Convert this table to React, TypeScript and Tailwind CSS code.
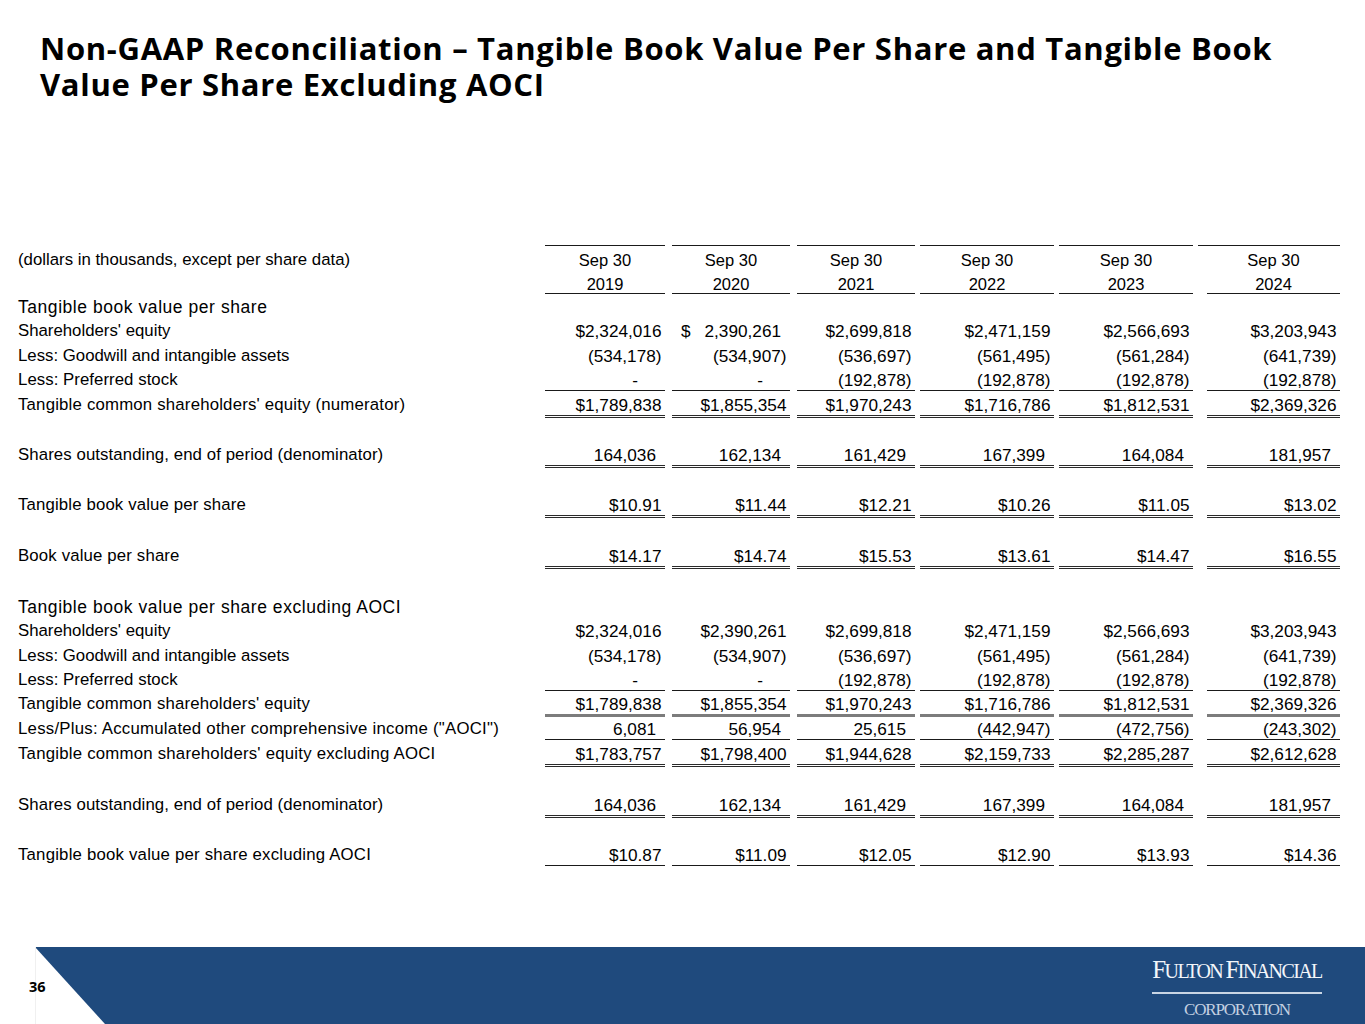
import React from "react";

type Border = "none" | "single" | "double" | "grey";
type Row =
  | { t: "blank"; h: string }
  | { t: "section"; label: string; h: string }
  | { t: "data"; label: string; vals: string[]; b: Border; h: string; tr: string };

const COLS = [
  "w-[120px]",
  "ml-[7px] w-[118px]",
  "ml-[7px] w-[118px]",
  "ml-[5px] w-[134px]",
  "ml-[5px] w-[134px]",
  "ml-[14px] w-[133px]",
];
const TOPCOLS = [
  "w-[120px]",
  "ml-[7px] w-[118px]",
  "ml-[7px] w-[118px]",
  "ml-[5px] w-[134px]",
  "ml-[5px] w-[134px]",
  "ml-[5px] w-[142px]",
];

const BORDER: Record<Border, string> = {
  none: "h-[21.9px]",
  single: "box-content h-[21.9px] border-b border-[#1a1a1a]",
  double: "box-content h-[21.9px] border-b-[3px] border-double border-[#2a2a2a]",
  grey: "box-content h-[21.9px] border-b-[3px] border-solid border-[#7c7c7c]",
};

const SE1 = ["$2,324,016", "$ 2,390,261", "$2,699,818", "$2,471,159", "$2,566,693", "$3,203,943"];
const SE2 = ["$2,324,016", "$2,390,261", "$2,699,818", "$2,471,159", "$2,566,693", "$3,203,943"];
const GW = ["(534,178)", "(534,907)", "(536,697)", "(561,495)", "(561,284)", "(641,739)"];
const PS = ["-", "-", "(192,878)", "(192,878)", "(192,878)", "(192,878)"];
const TC = ["$1,789,838", "$1,855,354", "$1,970,243", "$1,716,786", "$1,812,531", "$2,369,326"];
const SO = ["164,036", "162,134", "161,429", "167,399", "164,084", "181,957"];

const ROWS: Row[] = [
  { t: "section", label: "Tangible book value per share", h: "h-[24px]" },
  { t: "data", label: "Shareholders' equity", vals: SE1, b: "none", h: "h-[25px]", tr: "tracking-normal" },
  { t: "data", label: "Less: Goodwill and intangible assets", vals: GW, b: "none", h: "h-[24px]", tr: "tracking-normal" },
  { t: "data", label: "Less: Preferred stock", vals: PS, b: "single", h: "h-[24.5px]", tr: "tracking-[0.05px]" },
  { t: "data", label: "Tangible common shareholders' equity (numerator)", vals: TC, b: "double", h: "h-[24.5px]", tr: "tracking-[0.19px]" },
  { t: "blank", h: "h-[26px]" },
  { t: "data", label: "Shares outstanding, end of period (denominator)", vals: SO, b: "double", h: "h-[24.5px]", tr: "tracking-[0.09px]" },
  { t: "blank", h: "h-[25.5px]" },
  { t: "data", label: "Tangible book value per share", vals: ["$10.91", "$11.44", "$12.21", "$10.26", "$11.05", "$13.02"], b: "double", h: "h-[25px]", tr: "tracking-[0.14px]" },
  { t: "blank", h: "h-[26px]" },
  { t: "data", label: "Book value per share", vals: ["$14.17", "$14.74", "$15.53", "$13.61", "$14.47", "$16.55"], b: "double", h: "h-[25px]", tr: "tracking-[0.15px]" },
  { t: "blank", h: "h-[26px]" },
  { t: "section", label: "Tangible book value per share excluding AOCI", h: "h-[24px]" },
  { t: "data", label: "Shareholders' equity", vals: SE2, b: "none", h: "h-[25px]", tr: "tracking-normal" },
  { t: "data", label: "Less: Goodwill and intangible assets", vals: GW, b: "none", h: "h-[24px]", tr: "tracking-normal" },
  { t: "data", label: "Less: Preferred stock", vals: PS, b: "single", h: "h-[24px]", tr: "tracking-[0.05px]" },
  { t: "data", label: "Tangible common shareholders' equity", vals: TC, b: "grey", h: "h-[25px]", tr: "tracking-[0.17px]" },
  { t: "data", label: "Less/Plus: Accumulated other comprehensive income (\"AOCI\")", vals: ["6,081", "56,954", "25,615", "(442,947)", "(472,756)", "(243,302)"], b: "single", h: "h-[25px]", tr: "tracking-[0.24px]" },
  { t: "data", label: "Tangible common shareholders' equity excluding AOCI", vals: ["$1,783,757", "$1,798,400", "$1,944,628", "$2,159,733", "$2,285,287", "$2,612,628"], b: "double", h: "h-[25px]", tr: "tracking-[0.22px]" },
  { t: "blank", h: "h-[26px]" },
  { t: "data", label: "Shares outstanding, end of period (denominator)", vals: SO, b: "double", h: "h-[25px]", tr: "tracking-[0.09px]" },
  { t: "blank", h: "h-[25px]" },
  { t: "data", label: "Tangible book value per share excluding AOCI", vals: ["$10.87", "$11.09", "$12.05", "$12.90", "$13.93", "$14.36"], b: "single", h: "h-[24px]", tr: "tracking-[0.2px]" },
];

function Value({ v }: { v: string }) {
  if (v === "-") {
    return <div className="text-right pr-[27px]">-</div>;
  }
  if (v.startsWith("$ ")) {
    return (
      <div className="flex justify-between pl-[9px] pr-[9px]">
        <span>$</span>
        <span>{v.slice(2)}</span>
      </div>
    );
  }
  const plain = !v.startsWith("$") && !v.startsWith("(");
  return <div className={plain ? "text-right pr-[9px]" : "text-right pr-[3.5px]"}>{v}</div>;
}

function DataRow({ row }: { row: Row }) {
  if (row.t === "blank") return <div className={row.h} />;
  if (row.t === "section") {
    return (
      <div className={`flex items-start ${row.h}`}>
        <div className="text-[17.5px] leading-[24px] tracking-[0.55px] whitespace-nowrap">{row.label}</div>
      </div>
    );
  }
  return (
    <div className={`flex items-start ${row.h}`}>
      <div className={`w-[527px] shrink-0 text-[16.8px] leading-[24px] whitespace-nowrap ${row.tr}`}>{row.label}</div>
      {row.vals.map((v, i) => (
        <div key={i} className={`${COLS[i]} shrink-0 ${BORDER[row.b]} text-[17.2px] leading-[24px] whitespace-nowrap`}>
          <Value v={v} />
        </div>
      ))}
    </div>
  );
}

export default function App() {
  const years = ["2019", "2020", "2021", "2022", "2023", "2024"];
  return (
    <div className="w-[1365px] h-[1024px] bg-white text-black flex flex-col overflow-hidden font-['Liberation_Sans',Arial,sans-serif]">
      <h1 className="pl-[40px] pt-[30px] text-[31px] leading-[36px] font-bold font-['Open_Sans',sans-serif] tracking-[0.7px] text-black">
        Non-GAAP Reconciliation – Tangible Book Value Per Share and Tangible Book
        <br />
        Value Per Share Excluding AOCI
      </h1>

      <div className="mt-[143px] pl-[18px]">
        <div className="flex h-[1px]">
          <div className="w-[527px] shrink-0" />
          {TOPCOLS.map((c, i) => (
            <div key={i} className={`${c} shrink-0 h-[1px] bg-[#1a1a1a]`} />
          ))}
        </div>
        <div className="mt-[1.7px] flex items-start h-[24px]">
          <div className="w-[527px] shrink-0 text-[16.8px] leading-[24px] whitespace-nowrap">
            (dollars in thousands, except per share data)
          </div>
          {COLS.map((c, i) => (
            <div key={i} className={`${c} shrink-0 h-[21.4px] text-[16.5px] leading-[24px] text-center`}>
              Sep 30
            </div>
          ))}
        </div>
        <div className="flex items-start h-[23.5px]">
          <div className="w-[527px] shrink-0" />
          {COLS.map((c, i) => (
            <div key={i} className={`${c} shrink-0 box-content h-[21.4px] border-b border-[#1a1a1a] text-[16.5px] leading-[24px] text-center`}>
              {years[i]}
            </div>
          ))}
        </div>
        {ROWS.map((r, i) => (
          <DataRow key={i} row={r} />
        ))}
      </div>

      <footer className="mt-auto relative h-[77px] flex items-start">
        <div className="absolute inset-0 bg-[#1f4a7d] [clip-path:polygon(35px_0,100%_0,100%_100%,105px_100%)]" />
        <div className="absolute left-[35px] top-0 bottom-0 w-[1px] bg-[#f0f0f0]" />
        <div className="relative ml-[29px] mt-[31px] text-[14.5px] leading-[18px] font-bold font-['Open_Sans',sans-serif] text-black">
          36
        </div>
        <div className="relative ml-auto mr-[43px] mt-[12px] w-[170px] flex flex-col items-center font-['Liberation_Serif',serif]">
          <div className="whitespace-nowrap leading-[22px] text-[#f3f6fa] tracking-[-1.6px]">
            <span className="text-[25px]">F</span>
            <span className="text-[20px]">ULTON </span>
            <span className="text-[25px]">F</span>
            <span className="text-[20px]">INANCIAL</span>
          </div>
          <div className="w-full h-[2px] bg-[#c9d5e4] mt-[8px]" />
          <div className="mt-[7px] text-[17px] leading-[18px] tracking-[-1.2px] text-[#c3d0e1]">CORPORATION</div>
        </div>
      </footer>
    </div>
  );
}
